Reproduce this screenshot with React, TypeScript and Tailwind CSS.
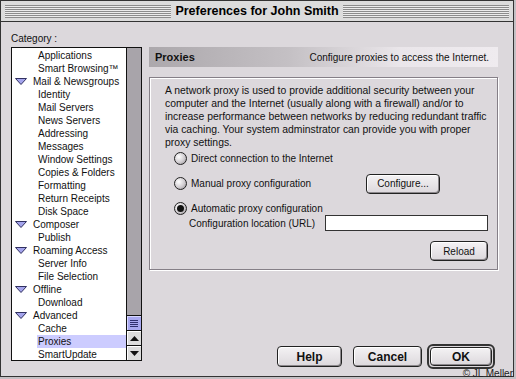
import React from "react";

type Item = { label: string; parent?: boolean; selected?: boolean };

const items: Item[] = [
  { label: "Applications" },
  { label: "Smart Browsing™" },
  { label: "Mail & Newsgroups", parent: true },
  { label: "Identity" },
  { label: "Mail Servers" },
  { label: "News Servers" },
  { label: "Addressing" },
  { label: "Messages" },
  { label: "Window Settings" },
  { label: "Copies & Folders" },
  { label: "Formatting" },
  { label: "Return Receipts" },
  { label: "Disk Space" },
  { label: "Composer", parent: true },
  { label: "Publish" },
  { label: "Roaming Access", parent: true },
  { label: "Server Info" },
  { label: "File Selection" },
  { label: "Offline", parent: true },
  { label: "Download" },
  { label: "Advanced", parent: true },
  { label: "Cache" },
  { label: "Proxies", selected: true },
  { label: "SmartUpdate" },
];

function Triangle() {
  return (
    <svg width="12" height="7" viewBox="0 0 12 7" className="shrink-0">
      <path d="M0.5 0.5 L11.5 0.5 L6 6.5 Z" fill="#a4a4ec" stroke="#303060" strokeWidth="1" />
    </svg>
  );
}

function Radio({ checked }: { checked?: boolean }) {
  return (
    <span className="relative w-[13px] h-[13px] rounded-full border border-[#222] bg-[radial-gradient(circle_at_35%_35%,#ffffff,#d0ccd0_55%,#8c888c)] shrink-0 flex items-center justify-center">
      {checked && <span className="w-[7px] h-[7px] rounded-full bg-[#111]" />}
    </span>
  );
}

function MacButton({ children, className = "" }: { children: React.ReactNode; className?: string }) {
  return (
    <div
      className={
        "flex items-center justify-center rounded-[4px] border border-[#222] bg-[linear-gradient(to_bottom,#f4f2f4,#dcd8dc)] shadow-[inset_1px_1px_0_#fff,inset_-1px_-1px_0_#8c888c] " +
        className
      }
    >
      {children}
    </div>
  );
}

export default function App() {
  return (
    <div className="w-[516px] h-[379px] bg-[#c4c0c4] overflow-hidden relative font-['Liberation_Sans',Arial,sans-serif] text-[10px] text-[#111]">
      <div className="w-[514px] h-[377px] border border-[#333] bg-[#dcd8dc] flex flex-col">
        {/* title bar */}
        <div className="h-[21px] shrink-0 border-b border-[#333] bg-[#dcdcdc] px-[4px] py-[3px] flex items-center">
          <div className="flex-1 h-[13px] bg-[repeating-linear-gradient(to_bottom,#8c8c8c_0px,#8c8c8c_1px,#ececec_1px,#ececec_2px)]" />
          <div className="px-[4px] text-[12.5px] font-bold leading-none text-black">Preferences for John Smith</div>
          <div className="flex-1 h-[13px] bg-[repeating-linear-gradient(to_bottom,#8c8c8c_0px,#8c8c8c_1px,#ececec_1px,#ececec_2px)]" />
        </div>

        <div className="flex flex-1 pl-[10px] pr-[15px]">
          {/* category column */}
          <div className="w-[131px] flex flex-col">
            <div className="h-[25px] pt-[10px] leading-[13px]">Category :</div>
            <div className="h-[314px] border border-[#111] bg-white flex">
              <div className="flex-1 pt-[1px]">
                {items.map((it) => (
                  <div key={it.label} className="h-[13px] flex items-center leading-[13px]">
                    {it.parent ? (
                      <div className="flex items-center pl-[3px] gap-[6px]">
                        <Triangle />
                        <span>{it.label}</span>
                      </div>
                    ) : (
                      <div className={"ml-[25px] flex-1 h-full pl-[1px] " + (it.selected ? "bg-[#ccccff]" : "")}>
                        {it.label}
                      </div>
                    )}
                  </div>
                ))}
              </div>
              {/* scrollbar */}
              <div className="w-[15px] border-l border-[#111] flex flex-col bg-[#a8a4aa]">
                <div className="flex-1" />
                <div className="h-[15px] border-t border-[#111] bg-[#a8a8f0] flex flex-col items-center justify-center gap-[1px] shadow-[inset_1px_1px_0_#d8d8ff]">
                  <span className="w-[8px] h-[1px] bg-[#303070]" />
                  <span className="w-[8px] h-[1px] bg-[#303070]" />
                  <span className="w-[8px] h-[1px] bg-[#303070]" />
                  <span className="w-[8px] h-[1px] bg-[#303070]" />
                </div>
                <div className="h-[15px] border-t border-[#111] bg-[#dcdcdc] flex items-center justify-center shadow-[inset_1px_1px_0_#fff]">
                  <svg width="9" height="5" viewBox="0 0 9 5">
                    <path d="M0 5 L9 5 L4.5 0 Z" fill="#111" />
                  </svg>
                </div>
                <div className="h-[15px] border-t border-[#111] bg-[#dcdcdc] flex items-center justify-center shadow-[inset_1px_1px_0_#fff]">
                  <svg width="9" height="5" viewBox="0 0 9 5">
                    <path d="M0 0 L9 0 L4.5 5 Z" fill="#111" />
                  </svg>
                </div>
              </div>
            </div>
          </div>

          {/* right pane */}
          <div className="ml-[7px] flex-1 flex flex-col pt-[25px]">
            <div className="h-[20px] flex items-center justify-between px-[6px] bg-[linear-gradient(to_right,#aca8ac,#c4c0c4_40%,#eae6ea_72%,#efebef)]">
              <span className="text-[11px] font-bold">Proxies</span>
              <span className="pr-[3px]">Configure proxies to access the Internet.</span>
            </div>

            <div className="mt-[10px] h-[193px] border border-[#857f87] shadow-[inset_1px_1px_0_#fff,1px_1px_0_#fff] pt-[6px] pl-[15px] pr-[9px] flex flex-col">
              <div className="leading-[13px] text-[10.4px] whitespace-nowrap">
                A network proxy is used to provide additional security between your
                <br />
                computer and the Internet (usually along with a firewall) and/or to
                <br />
                increase performance between networks by reducing redundant traffic
                <br />
                via caching. Your system adminstrator can provide you with proper
                <br />
                proxy settings.
              </div>
              <div className="-mt-[3px] pl-[9px] h-[25px] flex items-center gap-[4px]">
                <Radio />
                <span>Direct connection to the Internet</span>
              </div>
              <div className="pl-[9px] h-[25px] flex items-center gap-[4px]">
                <Radio />
                <span className="w-[171px]">Manual proxy configuration</span>
                <MacButton className="w-[74px] h-[20px]">Configure...</MacButton>
              </div>
              <div className="pl-[9px] h-[25px] flex items-center gap-[4px]">
                <Radio checked />
                <span>Automatic proxy configuration</span>
              </div>
              <div className="pl-[24px] flex items-center -mt-[6px]">
                <span className="w-[136px]">Configuration location (URL)</span>
                <div className="flex-1 h-[16px] border border-[#333] bg-white" />
              </div>
              <div className="mt-[10px] flex justify-end">
                <MacButton className="w-[58px] h-[20px]">Reload</MacButton>
              </div>
            </div>

            <div className="flex-1" />
            <div className="flex justify-end items-center pb-[7px] pr-[3px]">
              <MacButton className="w-[65px] h-[21px] text-[12px] font-bold">Help</MacButton>
              <MacButton className="ml-[11px] w-[69px] h-[21px] text-[12px] font-bold">Cancel</MacButton>
              <div className="ml-[5px] w-[68px] h-[25px] rounded-[6px] border-[2px] border-[#333] p-[1px] flex">
                <MacButton className="flex-1 text-[12px] font-bold">OK</MacButton>
              </div>
            </div>
          </div>
        </div>
      </div>
      <div className="absolute right-[2px] bottom-0 text-[10px] leading-[11px] text-[#222] px-[1px]">© JL Meller</div>
    </div>
  );
}
